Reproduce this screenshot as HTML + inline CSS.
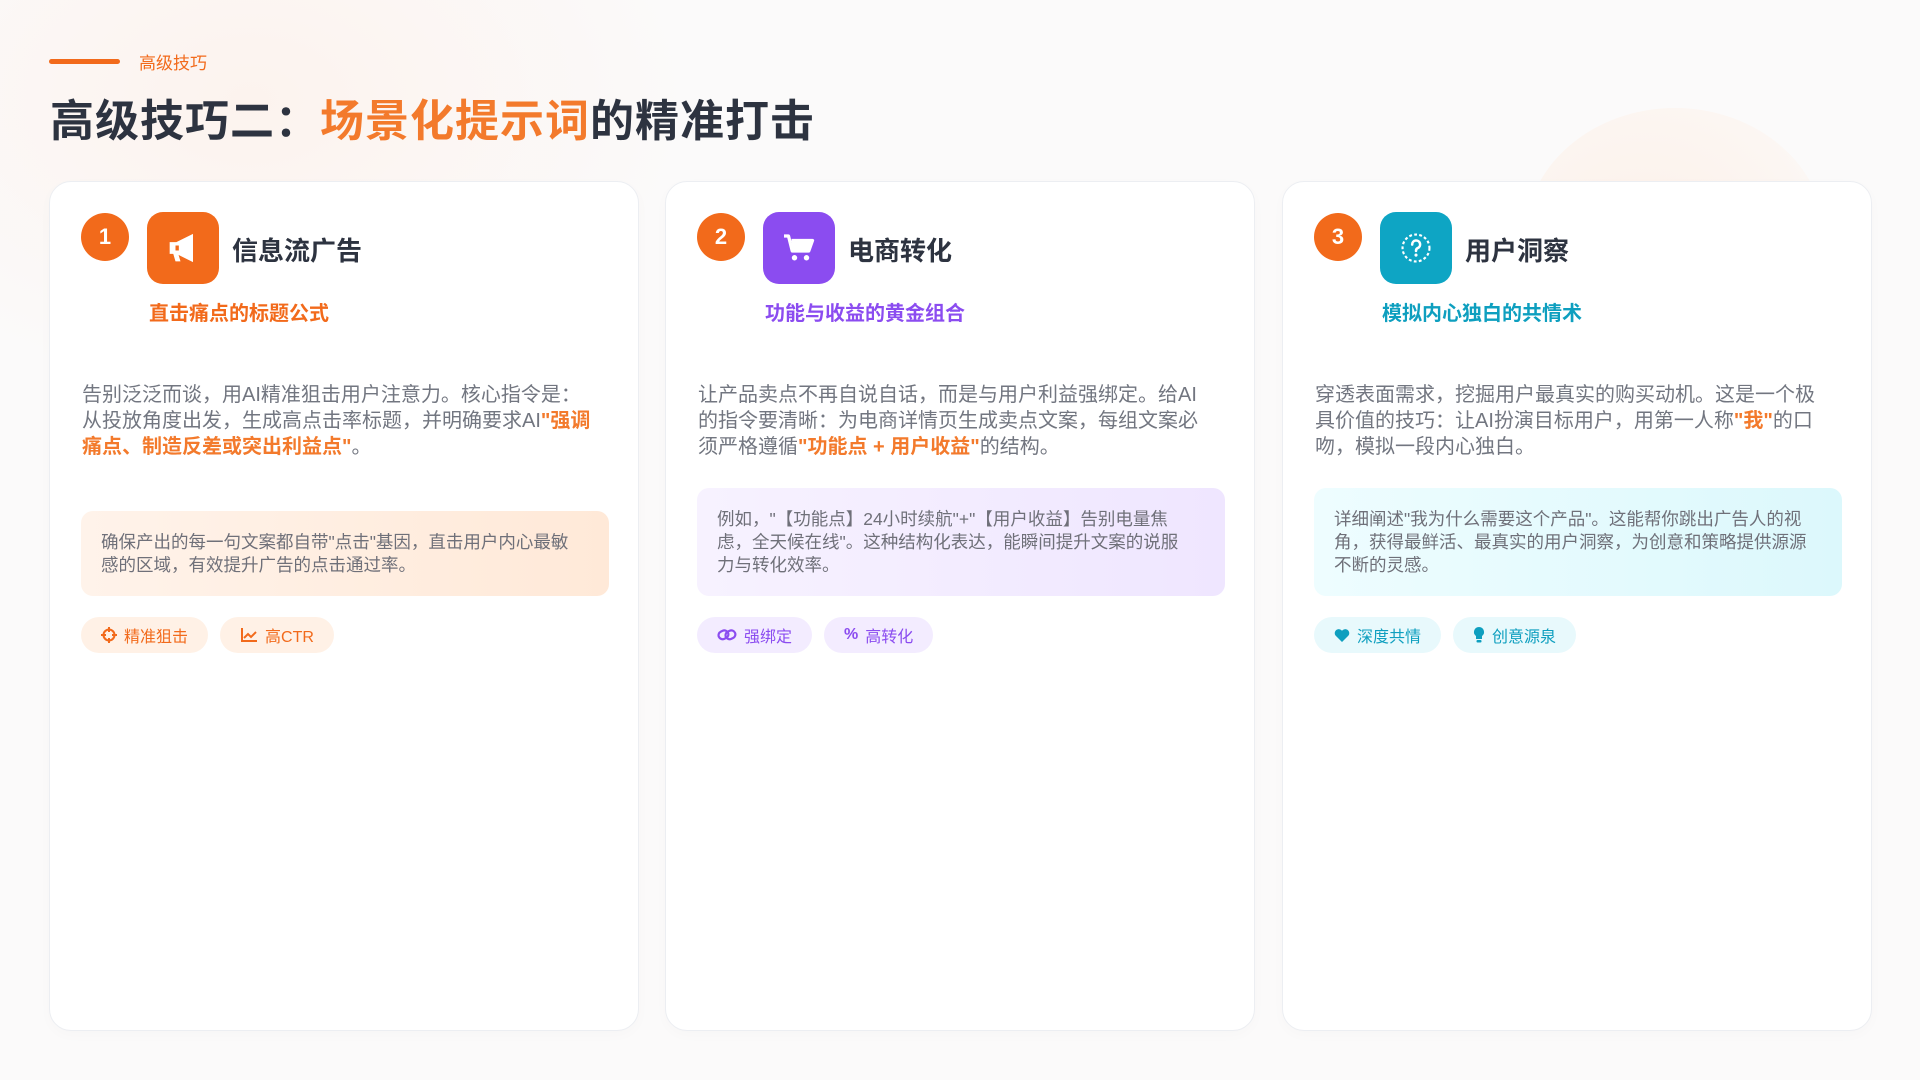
<!DOCTYPE html>
<html><head><meta charset="utf-8"><style>
*{margin:0;padding:0;box-sizing:border-box}
body{width:1920px;height:1080px;overflow:hidden;background:#fbfafa;font-family:"Liberation Sans","Noto Sans CJK SC",sans-serif;position:relative}
.blob{position:absolute;left:1525px;top:108px;width:300px;height:260px;border-radius:50%;background:radial-gradient(circle at 40% 60%,#fdf0e8,#fcf6f2 70%,rgba(252,248,246,0));}
.glow{position:absolute;left:-200px;top:-200px;width:900px;height:600px;border-radius:50%;background:radial-gradient(#fcf3ee,rgba(251,250,250,0) 70%)}
.line{position:absolute;left:49px;top:59px;width:71px;height:5px;border-radius:3px;background:#f26a1b}
.lab{position:absolute;left:139px;top:49px;font-size:17px;color:#f26a1b}
h1{position:absolute;left:50px;top:85px;font-size:44px;font-weight:bold;color:#2d3340;letter-spacing:1px;white-space:nowrap}
h1 span{color:#f37a2c}
.card{position:absolute;top:181px;width:590px;height:850px;background:#fff;border:1.5px solid #eceef2;border-radius:22px;box-shadow:0 4px 14px rgba(0,0,0,0.02)}
.badge{position:absolute;left:31px;top:31px;width:48px;height:48px;border-radius:50%;background:#f26a1b;color:#fff;font-size:22px;font-weight:bold;text-align:center;line-height:48px}
.ic{position:absolute;left:97px;top:30px;width:72px;height:72px;border-radius:16px;display:flex;align-items:center;justify-content:center}
.tt{position:absolute;left:182px;top:49px;font-size:26px;font-weight:bold;color:#2d3340}
.sub{position:absolute;left:99px;top:115px;font-size:20px;font-weight:bold}
.body{position:absolute;left:32px;top:200px;width:512px;font-size:20px;line-height:26px;color:#727680}
.body b{color:#f37a2c}
.box{position:absolute;left:31px;bottom:434px;width:528px;border-radius:12px;padding:20px 30px 19px 20px;font-size:17.5px;line-height:23px;color:#6f7079}
.tags{position:absolute;left:31px;top:435px;display:flex;gap:12px}
.tag{height:36px;border-radius:18px;padding:0 20px;display:flex;align-items:center;gap:7px;font-size:16px}
</style></head><body>
<div class="glow"></div>
<div class="blob"></div>
<div class="line"></div>
<div class="lab">高级技巧</div>
<h1>高级技巧二：<span>场景化提示词</span>的精准打击</h1>

<div class="card" style="left:49px">
  <div class="badge">1</div>
  <div class="ic" style="background:#f26a1b">
    <svg width="40" height="40" viewBox="0 0 24 24"><path d="M4 8.5h4l10-5v17l-10-5H4z" fill="#fff"/><path d="M6 15l1.5 5h3L9 15z" fill="#fff"/><path d="M7.5 10.5v3h2v-3z" fill="#f26a1b"/></svg>
  </div>
  <div class="tt">信息流广告</div>
  <div class="sub" style="color:#f26a1b">直击痛点的标题公式</div>
  <div class="body">告别泛泛而谈，用AI精准狙击用户注意力。核心指令是：从投放角度出发，生成高点击率标题，并明确要求AI<b>"强调痛点、制造反差或突出利益点"</b>。</div>
  <div class="box" style="background:linear-gradient(90deg,#fff3ea,#ffe9d8)">确保产出的每一句文案都自带"点击"基因，直击用户内心最敏感的区域，有效提升广告的点击通过率。</div>
  <div class="tags">
    <div class="tag" style="background:#fff1e6;color:#f26a1b"><svg width="16" height="16" viewBox="0 0 16 16"><circle cx="8" cy="8" r="5.5" fill="none" stroke="#f26a1b" stroke-width="2"/><path d="M8 0v5M8 11v5M0 8h5M11 8h5" stroke="#f26a1b" stroke-width="2"/></svg>精准狙击</div>
    <div class="tag" style="background:#fff1e6;color:#f26a1b"><svg width="18" height="16" viewBox="0 0 18 16"><path d="M2 1v13h15" fill="none" stroke="#f26a1b" stroke-width="2"/><path d="M4 11l4-4 3 3 5-5" fill="none" stroke="#f26a1b" stroke-width="2"/></svg>高CTR</div>
  </div>
</div>

<div class="card" style="left:665px">
  <div class="badge">2</div>
  <div class="ic" style="background:#8b4cf0">
    <svg width="36" height="36" viewBox="0 0 24 24"><path d="M2 4h3l2.5 10h11L21 7H7" fill="none" stroke="#fff" stroke-width="2.2" stroke-linejoin="round"/><path d="M7 7h14l-2.5 7h-11z" fill="#fff"/><circle cx="9" cy="18.5" r="1.8" fill="#fff"/><circle cx="17" cy="18.5" r="1.8" fill="#fff"/></svg>
  </div>
  <div class="tt">电商转化</div>
  <div class="sub" style="color:#8b4cf0">功能与收益的黄金组合</div>
  <div class="body">让产品卖点不再自说自话，而是与用户利益强绑定。给AI的指令要清晰：为电商详情页生成卖点文案，每组文案必须严格遵循<b>"功能点 + 用户收益"</b>的结构。</div>
  <div class="box" style="background:linear-gradient(90deg,#f7f2ff,#efe6ff)">例如，"【功能点】24小时续航"+"【用户收益】告别电量焦虑，全天候在线"。这种结构化表达，能瞬间提升文案的说服力与转化效率。</div>
  <div class="tags">
    <div class="tag" style="background:#f3ecff;color:#8b4cf0"><svg width="20" height="16" viewBox="0 0 20 16"><rect x="1.5" y="4" width="10" height="8" rx="4" fill="none" stroke="#8b4cf0" stroke-width="2.2" transform="rotate(-25 6 8)"/><rect x="8.5" y="4" width="10" height="8" rx="4" fill="none" stroke="#8b4cf0" stroke-width="2.2" transform="rotate(-25 13 8)"/></svg>强绑定</div>
    <div class="tag" style="background:#f3ecff;color:#8b4cf0"><span style="font-weight:bold">%</span>高转化</div>
  </div>
</div>

<div class="card" style="left:1282px">
  <div class="badge">3</div>
  <div class="ic" style="background:#0ea5c4">
    <svg width="34" height="34" viewBox="0 0 24 24"><circle cx="12" cy="12" r="9.5" fill="none" stroke="#fff" stroke-width="1.5" stroke-dasharray="2 1.6"/><path d="M9.3 9.5a2.8 2.8 0 1 1 3.8 2.6c-.8.4-1.1.9-1.1 1.9" fill="none" stroke="#fff" stroke-width="1.8" stroke-linecap="round"/><circle cx="12" cy="17" r="1.1" fill="#fff"/></svg>
  </div>
  <div class="tt">用户洞察</div>
  <div class="sub" style="color:#0e9fbf">模拟内心独白的共情术</div>
  <div class="body">穿透表面需求，挖掘用户最真实的购买动机。这是一个极具价值的技巧：让AI扮演目标用户，用第一人称<b>"我"</b>的口吻，模拟一段内心独白。</div>
  <div class="box" style="background:linear-gradient(90deg,#eefdff,#dcf8fc)">详细阐述"我为什么需要这个产品"。这能帮你跳出广告人的视角，获得最鲜活、最真实的用户洞察，为创意和策略提供源源不断的灵感。</div>
  <div class="tags">
    <div class="tag" style="background:#e8f9fc;color:#0e9fbf"><svg width="16" height="15" viewBox="0 0 16 15"><path d="M8 14L1.5 7.5A3.8 3.8 0 0 1 8 2.8a3.8 3.8 0 0 1 6.5 4.7z" fill="#0e9fbf"/></svg>深度共情</div>
    <div class="tag" style="background:#e8f9fc;color:#0e9fbf"><svg width="12" height="18" viewBox="0 0 12 18"><path d="M6 1a5 5 0 0 0-3 9v3h6v-3a5 5 0 0 0-3-9z" fill="#0e9fbf"/><rect x="3.5" y="14" width="5" height="2.5" rx="1" fill="#0e9fbf"/></svg>创意源泉</div>
  </div>
</div>
</body></html>
